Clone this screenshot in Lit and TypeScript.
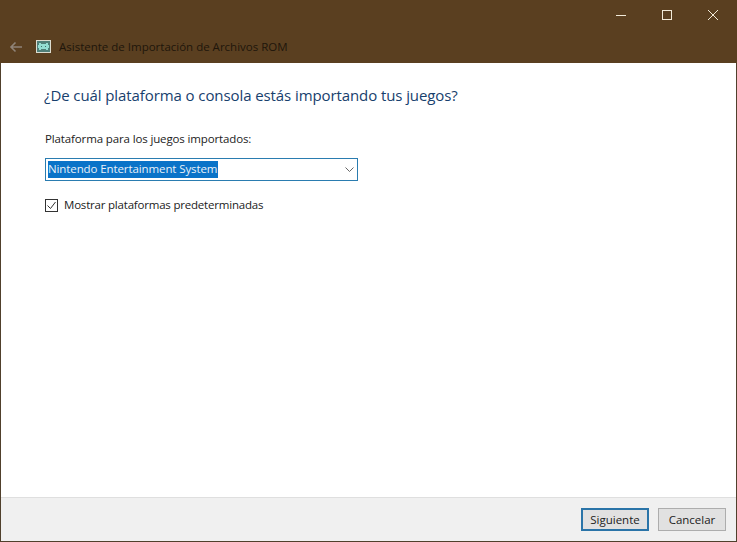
import { LitElement, html, css } from "lit";
import { customElement } from "lit/decorators.js";

@customElement("app-root")
export class AppRoot extends LitElement {
  static styles = css`
    :host {
      display: block;
      width: 737px;
      height: 542px;
      font-family: "Open Sans", "Noto Sans", "Liberation Sans", sans-serif;
      font-size: 11.5px;
      color: #222;
    }
    .window {
      box-sizing: border-box;
      width: 737px;
      height: 542px;
      display: flex;
      flex-direction: column;
      background: #fff;
      border: solid #50402c;
      border-width: 0 1px 1px 1px;
    }
    .titlebar {
      height: 63px;
      margin: 0 -1px;
      background: #5a3f20;
      display: flex;
      flex-direction: column;
      flex: none;
    }
    .caption {
      height: 30px;
      display: flex;
      justify-content: flex-end;
      padding-right: 1px;
    }
    .capbtn {
      width: 46px;
      height: 30px;
      display: flex;
      align-items: center;
      justify-content: center;
    }
    .nav {
      height: 33px;
      display: flex;
      align-items: center;
      padding-left: 9px;
    }
    .back {
      margin-right: 13px;
      display: block;
    }
    .appicon {
      margin-right: 8px;
      display: block;
    }
    .navtitle {
      color: #20160b;
      font-size: 11.5px;
    }
    .content {
      flex: 1;
      display: flex;
      flex-direction: column;
      padding: 21px 0 0 44px;
      align-items: flex-start;
    }
    h1 {
      margin: 0 0 0 -1px;
      font-size: 15px;
      font-weight: 400;
      letter-spacing: -0.09px;
      line-height: 22px;
      color: #17406d;
    }
    .label {
      margin-top: 25px;
      line-height: 16px;
      letter-spacing: -0.13px;
    }
    .combo {
      box-sizing: border-box;
      margin-top: 11px;
      width: 313px;
      height: 23px;
      border: 1px solid #2a7cb0;
      padding: 2px 3px 2px 2px;
      display: flex;
      align-items: center;
      justify-content: space-between;
    }
    .selected {
      background: #0a73c8;
      color: #e8f1f8;
      line-height: 15px;
      height: 17px;
      padding-right: 1px;
      letter-spacing: -0.1px;
    }
    .check {
      margin-top: 17px;
      display: flex;
      align-items: center;
      gap: 6px;
      line-height: 14px;
      letter-spacing: -0.2px;
    }
    .box {
      display: block;
    }
    .footer {
      flex: none;
      box-sizing: border-box;
      height: 44px;
      background: #f0f0f0;
      border-top: 1px solid #dfdfdf;
      display: flex;
      justify-content: flex-end;
      gap: 9px;
      padding: 10px 10px 0 0;
    }
    button {
      box-sizing: border-box;
      width: 68px;
      height: 23px;
      font: inherit;
      color: #222;
      background: #e1e1e1;
      border: 1px solid #adadad;
      padding: 0;
    }
    button.primary {
      border: 2px solid #2a74a8;
    }
  `;

  render() {
    return html`
      <div class="window">
        <div class="titlebar">
          <div class="caption">
            <div class="capbtn">
              <svg width="10" height="10" viewBox="0 0 10 10"><path d="M0 5.500h10" stroke="#f2ead8" fill="none" /></svg>
            </div>
            <div class="capbtn">
              <svg width="10" height="10" viewBox="0 0 10 10"><rect x=".5" y=".5" width="9" height="9" stroke="#f2ead8" fill="none" /></svg>
            </div>
            <div class="capbtn">
              <svg width="10" height="10" viewBox="0 0 10 10"><path d="M0 0l10 10M10 0L0 10" stroke="#f2ead8" fill="none" /></svg>
            </div>
          </div>
          <div class="nav">
            <svg class="back" width="14" height="12" viewBox="0 0 14 12">
              <path d="M13 6H2M6.500 1.500L2 6l4.500 4.500" stroke="#8f8377" stroke-width="1.600" fill="none" />
            </svg>
            <svg class="appicon" width="15" height="13" viewBox="0 0 15 13">
              <rect x=".5" y=".5" width="14" height="12" fill="#4f7f78" stroke="#dcdcd0" />
              <path d="M3 3h2v1h5V3h2v2h1v3h-1v2h-2V9H5v1H3V8H2V5h1z" fill="#93ddd2" />
              <path d="M5 6h1v1H5zM9 6h1v1H9z" fill="#3d6f68" />
            </svg>
            <span class="navtitle">Asistente de Importación de Archivos ROM</span>
          </div>
        </div>
        <div class="content">
          <h1>¿De cuál plataforma o consola estás importando tus juegos?</h1>
          <div class="label">Plataforma para los juegos importados:</div>
          <div class="combo">
            <span class="selected">Nintendo Entertainment System</span>
            <svg width="9" height="5" viewBox="0 0 9 5"><path d="M.5.500l4 4 4-4" stroke="#666" fill="none" /></svg>
          </div>
          <div class="check">
            <svg class="box" width="13" height="13" viewBox="0 0 13 13">
              <rect x=".5" y=".5" width="12" height="12" fill="#fff" stroke="#333" />
              <path d="M2.500 6.500l3 3 5-6.500" stroke="#333" fill="none" />
            </svg>
            <span>Mostrar plataformas predeterminadas</span>
          </div>
        </div>
        <div class="footer">
          <button class="primary">Siguiente</button>
          <button>Cancelar</button>
        </div>
      </div>
    `;
  }
}
